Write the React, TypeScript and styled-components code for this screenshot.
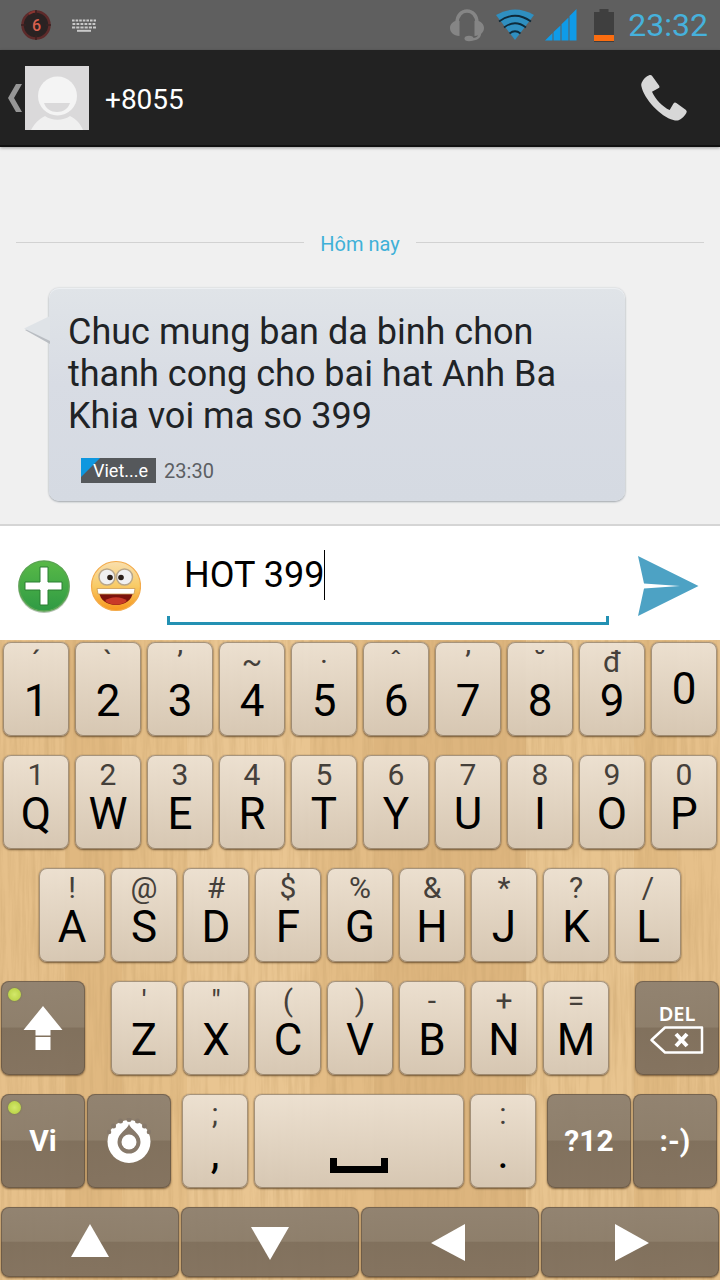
import React from "react";
import styled, { createGlobalStyle, css } from "styled-components";

const GlobalStyle = createGlobalStyle`
  *, *::before, *::after { box-sizing: border-box; }
  body { margin: 0; background: #f0f0f0; font-family: Roboto, "Noto Sans", sans-serif; }
  button { margin: 0; padding: 0; border: 0; background: none; font: inherit; color: inherit; cursor: pointer; }
  svg { display: block; flex: none; }
`;

const Screen = styled.div`
  display: flex;
  flex-direction: column;
  min-height: 100vh;
`;

const StatusBar = styled.div`
  display: flex;
  align-items: center;
  justify-content: space-between;
  height: 50px;
  padding: 0 12px 0 20px;
  background: #5f5f5f;
`;

const StatusGroup = styled.div<{ $gap: number }>`
  display: flex;
  align-items: center;
  gap: ${(p) => p.$gap}px;
`;

const Clock = styled.time`
  font-size: 32px;
  line-height: 38px;
  color: #46b1dc;
`;

const Header = styled.header`
  display: flex;
  align-items: center;
  height: 97px;
  padding: 0 32px 0 8px;
  background: #222;
  border-bottom: 2px solid #111;
  box-shadow: 0 1px 3px rgba(0, 0, 0, 0.35);
  z-index: 1;
`;

const BackButton = styled.button`
  display: flex;
  align-items: center;
  gap: 3px;
`;

const Contact = styled.h1`
  flex: 1;
  margin: 0;
  padding: 4px 0 0 16px;
  font-size: 28px;
  line-height: 34px;
  font-weight: 400;
  color: #fff;
`;

const Conversation = styled.main`
  flex: 1;
  padding: 82px 0 23px;
  background: #f0f0f0;
`;

const DayDivider = styled.div`
  display: flex;
  align-items: center;
  gap: 16px;
  margin: 0 16px 32px;
  font-size: 20px;
  line-height: 24px;
  color: #3fb0d8;

  &::before,
  &::after {
    content: "";
    flex: 1;
    height: 1px;
    background: #d2d2d2;
  }
`;

const DayLabel = styled.span`
  padding-top: 3px;
`;

const Bubble = styled.article`
  position: relative;
  margin: 0 95px 0 49px;
  padding: 23px 19px 18px;
  border-radius: 10px;
  background: linear-gradient(#e0e4e8, #d8dce4 45%, #d5dae2);
  box-shadow: 0 1px 2px #a4aab0, 0 0 2px #c8ccd0, inset 0 1px 0 #eceff2;
`;

const Tail = styled.svg`
  position: absolute;
  top: 28px;
  left: -26px;
`;

const MessageText = styled.p`
  margin: 0;
  font-size: 36px;
  line-height: 42px;
  color: #202326;
`;

const MessageMeta = styled.div`
  display: flex;
  align-items: center;
  gap: 8px;
  margin: 21px 0 0 13px;
  font-size: 18px;
  line-height: 25px;
`;

const SimTag = styled.span`
  padding: 0 8px 0 12px;
  background: linear-gradient(135deg, #0e97df 13px, #55585b 14px);
  color: #fff;
`;

const MetaTime = styled.time`
  padding-top: 2px;
  font-size: 20px;
  line-height: 23px;
  color: #5c5f63;
`;

const Compose = styled.form`
  display: flex;
  align-items: center;
  padding: 20px 21px 15px 17px;
  background: #fff;
  border-top: 2px solid #d5d5d5;
`;

const RoundButton = styled.button`
  margin-right: 18px;
`;

const Field = styled.label`
  flex: 1;
  margin: 0 29px 0 8px;
  padding-top: 4px;
`;

const FieldLine = styled.span`
  display: flex;
  align-items: center;
  height: 50px;
  margin-bottom: 16px;
  padding-left: 17px;
`;

const TextInput = styled.input`
  field-sizing: content;
  min-width: 0;
  max-width: 100%;
  padding: 0;
  border: 0;
  outline: 0;
  background: transparent;
  font: 36px/42px Roboto, "Noto Sans", sans-serif;
  color: #000;
  caret-color: transparent;
`;

const Caret = styled.span`
  width: 1px;
  height: 50px;
  background: #000;
`;

const FieldBracket = styled.span`
  display: block;
  height: 9px;
  border: solid #2391b3;
  border-width: 0 3px 3px;
`;

const Keyboard = styled.section`
  position: relative;
  isolation: isolate;
  display: flex;
  flex-direction: column;
  gap: 19px;
  padding: 2px 1px 3px;
  background: linear-gradient(
    90deg,
    #e6c08a 0 9%,
    #e0b880 9% 17%,
    #e5bf88 17% 26%,
    #e9c591 26% 43%,
    #e3bc85 43% 52%,
    #ddb57e 52% 73%,
    #e8c48f 73% 88%,
    #e1ba82 88% 94%,
    #e6c08a 94%
  );
`;

const Grain = styled.svg`
  position: absolute;
  inset: 0;
  z-index: -1;
`;

const KeyRow = styled.div<{ $start?: number; $end?: number }>`
  display: flex;
  justify-content: space-between;
  padding: 0 ${(p) => p.$end ?? 0}px 0 ${(p) => p.$start ?? 0}px;
`;

const KeyGroup = styled.div<{ $grow: number; $gap: number; $margin?: number }>`
  display: flex;
  flex: ${(p) => p.$grow} 1 0;
  gap: ${(p) => p.$gap}px;
  margin: 0 ${(p) => p.$margin ?? 0}px;
`;

const lightKey = css`
  background: linear-gradient(rgba(237, 227, 214, 0.92), rgba(214, 200, 182, 0.93));
  box-shadow: inset 0 0 0 1px rgba(120, 96, 68, 0.6), 0 1px 2px rgba(80, 56, 30, 0.75),
    0 0 1px rgba(110, 84, 54, 0.6);
  color: #000;
`;

const darkKey = css`
  background: linear-gradient(
    rgba(143, 129, 112, 0.96),
    rgba(138, 124, 106, 0.95) 49%,
    rgba(124, 109, 91, 0.95) 50%,
    rgba(128, 112, 94, 0.95)
  );
  box-shadow: inset 0 0 0 1px rgba(90, 70, 48, 0.5), 0 1px 2px rgba(80, 52, 24, 0.7);
  color: #fff;
`;

const Key = styled.button<{ $dark?: boolean; $grow?: number; $short?: boolean }>`
  position: relative;
  display: flex;
  flex: ${(p) => p.$grow ?? 66} 1 0;
  min-width: 0;
  flex-direction: column;
  align-items: center;
  justify-content: center;
  height: ${(p) => (p.$short ? 70 : 94)}px;
  border-radius: 8px;
  ${(p) => (p.$dark ? darkKey : lightKey)}
`;

const Hint = styled.span`
  height: 32px;
  font-size: 30px;
  line-height: 32px;
  color: #45403a;
`;

const Letter = styled.span<{ $alone?: boolean }>`
  font-size: 44px;
  line-height: 46px;
  margin-bottom: ${(p) => (p.$alone ? 0 : 8)}px;
`;

const KeyLabel = styled.span`
  font-size: 30px;
  line-height: 36px;
  font-weight: 700;
`;

const DeleteLabel = styled.span`
  font: 600 20px/24px "Noto Sans", sans-serif;
`;

const Light = styled.span`
  position: absolute;
  top: 7px;
  left: 7px;
  width: 13px;
  height: 13px;
  border-radius: 50%;
  background: radial-gradient(#d3e86a, #b2cd3c);
  box-shadow: 0 0 2px #6e7a34;
`;

type KeyDef = [string, string];

const numberRow: KeyDef[] = [
  ["´", "1"], ["`", "2"], ["ʼ", "3"], ["~", "4"], ["·", "5"],
  ["ˆ", "6"], ["ʼ", "7"], ["˘", "8"], ["đ", "9"], ["", "0"],
];
const topRow: KeyDef[] = [
  ["1", "Q"], ["2", "W"], ["3", "E"], ["4", "R"], ["5", "T"],
  ["6", "Y"], ["7", "U"], ["8", "I"], ["9", "O"], ["0", "P"],
];
const homeRow: KeyDef[] = [
  ["!", "A"], ["@", "S"], ["#", "D"], ["$", "F"], ["%", "G"],
  ["&", "H"], ["*", "J"], ["?", "K"], ["/", "L"],
];
const bottomRow: KeyDef[] = [
  ["'", "Z"], ['"', "X"], ["(", "C"], [")", "V"], ["-", "B"], ["+", "N"], ["=", "M"],
];

const arrows = [
  { label: "Up", points: "20,1 39,34 1,34" },
  { label: "Down", points: "1,4 39,4 20,37" },
  { label: "Left", points: "35,1 35,38 1,20" },
  { label: "Right", points: "5,1 5,38 39,20" },
];

function LetterKeys({ keys }: { keys: KeyDef[] }) {
  return (
    <>
      {keys.map(([hint, main]) => (
        <Key key={main} type="button">
          {hint && <Hint>{hint}</Hint>}
          <Letter $alone={!hint}>{main}</Letter>
        </Key>
      ))}
    </>
  );
}

function CounterIcon() {
  return (
    <svg width="32" height="32" viewBox="0 0 32 32">
      <circle cx="16" cy="16" r="13.5" fill="#2a2222" stroke="#5d2a2a" strokeWidth="2.5" />
      <path d="M16 1v5M16 26v5M1 16h5M26 16h5" stroke="#3a2020" strokeWidth="1.5" />
      <path d="M9 5a13.500 13.500 0 0 1 6-2.500" stroke="#8a3530" strokeWidth="2" fill="none" />
      <text x="16.500" y="21.500" textAnchor="middle" fontSize="16" fontWeight="500" fill="#d8604f">6</text>
    </svg>
  );
}

function KeyboardIcon() {
  return (
    <svg width="24" height="13" viewBox="0 0 24 13" stroke="#c9c9c9" strokeWidth="2" fill="none">
      <path d="M0 1.500h24" strokeDasharray="2.600 1" />
      <path d="M0.500 5h23" strokeDasharray="2.800 1.200" />
      <path d="M0 8.500h24" strokeDasharray="3.200 1" />
      <path d="M5 11.800h14" />
    </svg>
  );
}

function HeadsetIcon() {
  return (
    <svg width="36" height="34" viewBox="0 0 36 34">
      <path d="M8 15C8 -1 28 -1 28 15" fill="none" stroke="#858585" strokeWidth="3.500" />
      <path d="M10.500 13v15c-6 0-9.500-4-9.500-8s4-8 9.500-7zM25.500 13v15c6 0 9.500-4 9.500-8s-4-8-9.500-7z" fill="#858585" />
      <path d="M31 24c0 7-5 7.500-12 7.500" fill="none" stroke="#858585" strokeWidth="2.500" />
      <ellipse cx="20" cy="30.500" rx="4.500" ry="2.800" fill="#858585" />
    </svg>
  );
}

function WifiIcon() {
  return (
    <svg width="40" height="32" viewBox="0 0 40 32">
      <path d="M1 6Q20 -5 39 6L20 31z" fill="#2f8fc0" />
      <path d="M4 12.500Q20 1 36 12.500M9 18.500Q20 10 31 18.500M14.500 24.500Q20 20 25.500 24.500" fill="none" stroke="#0e2a3a" strokeWidth="1.800" />
    </svg>
  );
}

function SignalIcon() {
  return (
    <svg width="32" height="32" viewBox="0 0 32 32" fill="#0f9be8">
      <path d="M0 31.500L7.500 24v7.500zM8.500 23L15.500 16.500v15H8.500zM16.500 15.300L23.500 8.500v23h-7zM24.500 7L31.500 0v31.500h-7z" />
    </svg>
  );
}

function BatteryIcon() {
  return (
    <svg width="22" height="34" viewBox="0 0 22 34">
      <path d="M6.500 1h9v3H21v30H1V4h5.500z" fill="#3f3f3f" />
      <path d="M1 27h20v6H1z" fill="#fb6d10" />
    </svg>
  );
}

function AvatarIcon() {
  return (
    <svg width="64" height="64" viewBox="0 0 64 64">
      <rect width="64" height="64" fill="#dad9da" />
      <circle cx="32.500" cy="30" r="19.500" fill="#f4f4f4" />
      <path d="M19 37h26c-2 6-7 9-13 9s-11-3-13-9z" fill="#dad9da" />
      <path d="M6 64c4-7 8-11 14-14 7 5 18 5 25 0 6 3 10 7 13 14z" fill="#f0f0f0" />
    </svg>
  );
}

function PhoneIcon() {
  return (
    <svg width="48" height="48" viewBox="600 222 144 144">
      <path
        d="M605 248Q612 232 629 225Q634 224 637 229L658 258Q660 263 655 265L636 275C646 297 667 320 689 330L700 311Q704 305 709 309L738 330Q742 334 739 339Q730 355 716 361Q708 363 700 360C662 350 612 298 604 258Q603 252 605 248z"
        fill="#d7d7d7"
      />
    </svg>
  );
}

function AddIcon() {
  return (
    <svg width="54" height="54" viewBox="0 0 54 54">
      <defs>
        <linearGradient id="green" x1="0" y1="0" x2="0" y2="1">
          <stop offset="0" stopColor="#58b947" />
          <stop offset="1" stopColor="#2f9a44" />
        </linearGradient>
      </defs>
      <circle cx="27" cy="28" r="26" fill="#b4c4b2" />
      <circle cx="27" cy="27" r="25" fill="url(#green)" stroke="#5aa552" strokeWidth="1.500" />
      <path d="M23 8h8v15h14v8H31v15h-8V31H8v-8h15z" fill="#fff" stroke="#2b7f33" strokeWidth="1" />
    </svg>
  );
}

function SmileyIcon() {
  return (
    <svg width="52" height="54" viewBox="0 0 52 54">
      <defs>
        <linearGradient id="face" x1="0" y1="0" x2="0" y2="1">
          <stop offset="0" stopColor="#f9dfae" />
          <stop offset="0.500" stopColor="#f8cb66" />
          <stop offset="1" stopColor="#f7971d" />
        </linearGradient>
      </defs>
      <circle cx="27" cy="27" r="24.500" fill="url(#face)" stroke="#f3ab4c" strokeWidth="1.200" />
      <circle cx="18" cy="18" r="8" fill="#f1f1f1" stroke="#b8a68a" strokeWidth="1.500" />
      <circle cx="35.500" cy="18" r="8" fill="#f1f1f1" stroke="#b8a68a" strokeWidth="1.500" />
      <circle cx="21" cy="18.500" r="2.800" fill="#2c211a" />
      <circle cx="32" cy="18.500" r="2.800" fill="#2c211a" />
      <path d="M10 33h34c-1 8-8 13-17 13S11 41 10 33z" fill="#7c130c" />
      <path d="M16 42c5-5 17-5 22 0-6 5-16 5-22 0z" fill="#c93a28" />
      <path d="M8 29.500h38L45 35H9z" fill="#fff" stroke="#c99a56" strokeWidth="0.800" />
    </svg>
  );
}

function SendIcon() {
  return (
    <svg width="61" height="60" viewBox="0 0 61 60">
      <path d="M0 0L60.500 30L0 60L6 32.500L42 30L6 27.500z" fill="#4da2c4" />
    </svg>
  );
}

function ShiftIcon() {
  return (
    <svg width="40" height="46" viewBox="0 0 40 46" fill="#fff">
      <path d="M20 1L39.500 25H27.500v5.500h-15V25H.5z" />
      <path d="M12.500 32h15v13h-15z" />
    </svg>
  );
}

function SettingsIcon() {
  return (
    <svg width="44" height="46" viewBox="0 0 44 46">
      <circle cx="22" cy="23.500" r="21.500" fill="#fff" />
      <g fill="#87796a">
        <circle cx="22" cy="1.500" r="2.500" />
        <circle cx="13.500" cy="3" r="2.500" />
        <circle cx="30.500" cy="3" r="2.500" />
        <circle cx="6.500" cy="8" r="2.500" />
        <circle cx="37.500" cy="8" r="2.500" />
        <circle cx="2" cy="14" r="2.300" />
        <circle cx="42" cy="14" r="2.300" />
        <path d="M22 6c1 5 11.500 9 11.500 18a11.500 11.500 0 0 1-23 0c0-9 10.500-13 11.500-18z" />
      </g>
      <circle cx="22" cy="24" r="7.500" fill="#fff" />
    </svg>
  );
}

function DeleteIcon() {
  return (
    <svg width="54" height="28" viewBox="0 0 54 28" fill="none" stroke="#fff">
      <path d="M15 1.500h37v25H15L1.500 14z" strokeWidth="2.500" strokeLinejoin="round" />
      <path d="M26 8l11 12M37 8L26 20" strokeWidth="4" />
    </svg>
  );
}

export default function App() {
  const [text, setText] = React.useState("HOT 399");

  return (
    <Screen>
      <GlobalStyle />
      <StatusBar>
        <StatusGroup $gap={20}>
          <CounterIcon />
          <KeyboardIcon />
        </StatusGroup>
        <StatusGroup $gap={16}>
          <StatusGroup $gap={10}>
            <HeadsetIcon />
            <WifiIcon />
            <SignalIcon />
          </StatusGroup>
          <StatusGroup $gap={13}>
            <BatteryIcon />
            <Clock>23:32</Clock>
          </StatusGroup>
        </StatusGroup>
      </StatusBar>

      <Header>
        <BackButton type="button" aria-label="Back">
          <svg width="14" height="28" viewBox="0 0 14 28">
            <path d="M8 0h6L6 14l8 14H8L0 14z" fill="#969696" />
          </svg>
          <AvatarIcon />
        </BackButton>
        <Contact>+8055</Contact>
        <button type="button" aria-label="Call">
          <PhoneIcon />
        </button>
      </Header>

      <Conversation>
        <DayDivider>
          <DayLabel>Hôm nay</DayLabel>
        </DayDivider>
        <Bubble>
          <Tail width="27" height="30" viewBox="0 0 27 30">
            <path d="M27 2L2 14l25 14z" fill="#b9bdc2" />
            <path d="M27 0L1 12.500L27 25z" fill="#dfe3e7" />
          </Tail>
          <MessageText>Chuc mung ban da binh chon thanh cong cho bai hat Anh Ba Khia voi ma so 399</MessageText>
          <MessageMeta>
            <SimTag>Viet...e</SimTag>
            <MetaTime>23:30</MetaTime>
          </MessageMeta>
        </Bubble>
      </Conversation>

      <Compose onSubmit={(e) => e.preventDefault()}>
        <RoundButton type="button" aria-label="Attach">
          <AddIcon />
        </RoundButton>
        <RoundButton type="button" aria-label="Emoji">
          <SmileyIcon />
        </RoundButton>
        <Field>
          <FieldLine>
            <TextInput aria-label="Message" value={text} onChange={(e) => setText(e.target.value)} />
            <Caret />
          </FieldLine>
          <FieldBracket />
        </Field>
        <button type="submit" aria-label="Send">
          <SendIcon />
        </button>
      </Compose>

      <Keyboard aria-label="Keyboard">
        <Grain width="100%" height="100%" aria-hidden="true">
          <filter id="grain" x="0" y="0" width="100%" height="100%">
            <feTurbulence type="fractalNoise" baseFrequency="0.22 0.012" numOctaves="4" seed="7" />
            <feColorMatrix values="0 0 0 0 0.6  0 0 0 0 0.38  0 0 0 0 0.16  1 0 0 0 -0.380" />
          </filter>
          <rect width="100%" height="100%" filter="url(#grain)" />
        </Grain>

        <KeyRow $start={2} $end={2}>
          <KeyGroup $grow={1} $gap={6}>
            <LetterKeys keys={numberRow} />
          </KeyGroup>
        </KeyRow>
        <KeyRow $start={2} $end={2}>
          <KeyGroup $grow={1} $gap={6}>
            <LetterKeys keys={topRow} />
          </KeyGroup>
        </KeyRow>
        <KeyRow $start={38} $end={38}>
          <KeyGroup $grow={1} $gap={6}>
            <LetterKeys keys={homeRow} />
          </KeyGroup>
        </KeyRow>
        <KeyRow>
          <Key type="button" $dark $grow={84} aria-label="Shift">
            <Light />
            <ShiftIcon />
          </Key>
          <KeyGroup $grow={498} $gap={6} $margin={26}>
            <LetterKeys keys={bottomRow} />
          </KeyGroup>
          <Key type="button" $dark $grow={84} aria-label="Delete">
            <DeleteLabel>DEL</DeleteLabel>
            <DeleteIcon />
          </Key>
        </KeyRow>
        <KeyRow $end={2}>
          <KeyGroup $grow={170} $gap={2}>
            <Key type="button" $dark>
              <Light />
              <KeyLabel>Vi</KeyLabel>
            </Key>
            <Key type="button" $dark aria-label="Settings">
              <SettingsIcon />
            </Key>
          </KeyGroup>
          <KeyGroup $grow={354} $gap={6} $margin={11}>
            <LetterKeys keys={[[";", ","]]} />
            <Key type="button" $grow={210} aria-label="Space">
              <svg width="58" height="68" viewBox="0 0 58 68">
                <path d="M3.500 51v11.500h51V51" fill="none" stroke="#000" strokeWidth="7" />
              </svg>
            </Key>
            <LetterKeys keys={[[":", "."]]} />
          </KeyGroup>
          <KeyGroup $grow={170} $gap={2}>
            <Key type="button" $dark>
              <KeyLabel>?12</KeyLabel>
            </Key>
            <Key type="button" $dark>
              <KeyLabel>:-)</KeyLabel>
            </Key>
          </KeyGroup>
        </KeyRow>
        <KeyRow>
          <KeyGroup $grow={1} $gap={2}>
            {arrows.map((arrow) => (
              <Key key={arrow.label} type="button" $dark $short aria-label={arrow.label}>
                <svg width="40" height="38" viewBox="0 0 40 38">
                  <polygon points={arrow.points} fill="#fff" />
                </svg>
              </Key>
            ))}
          </KeyGroup>
        </KeyRow>
      </Keyboard>
    </Screen>
  );
}
